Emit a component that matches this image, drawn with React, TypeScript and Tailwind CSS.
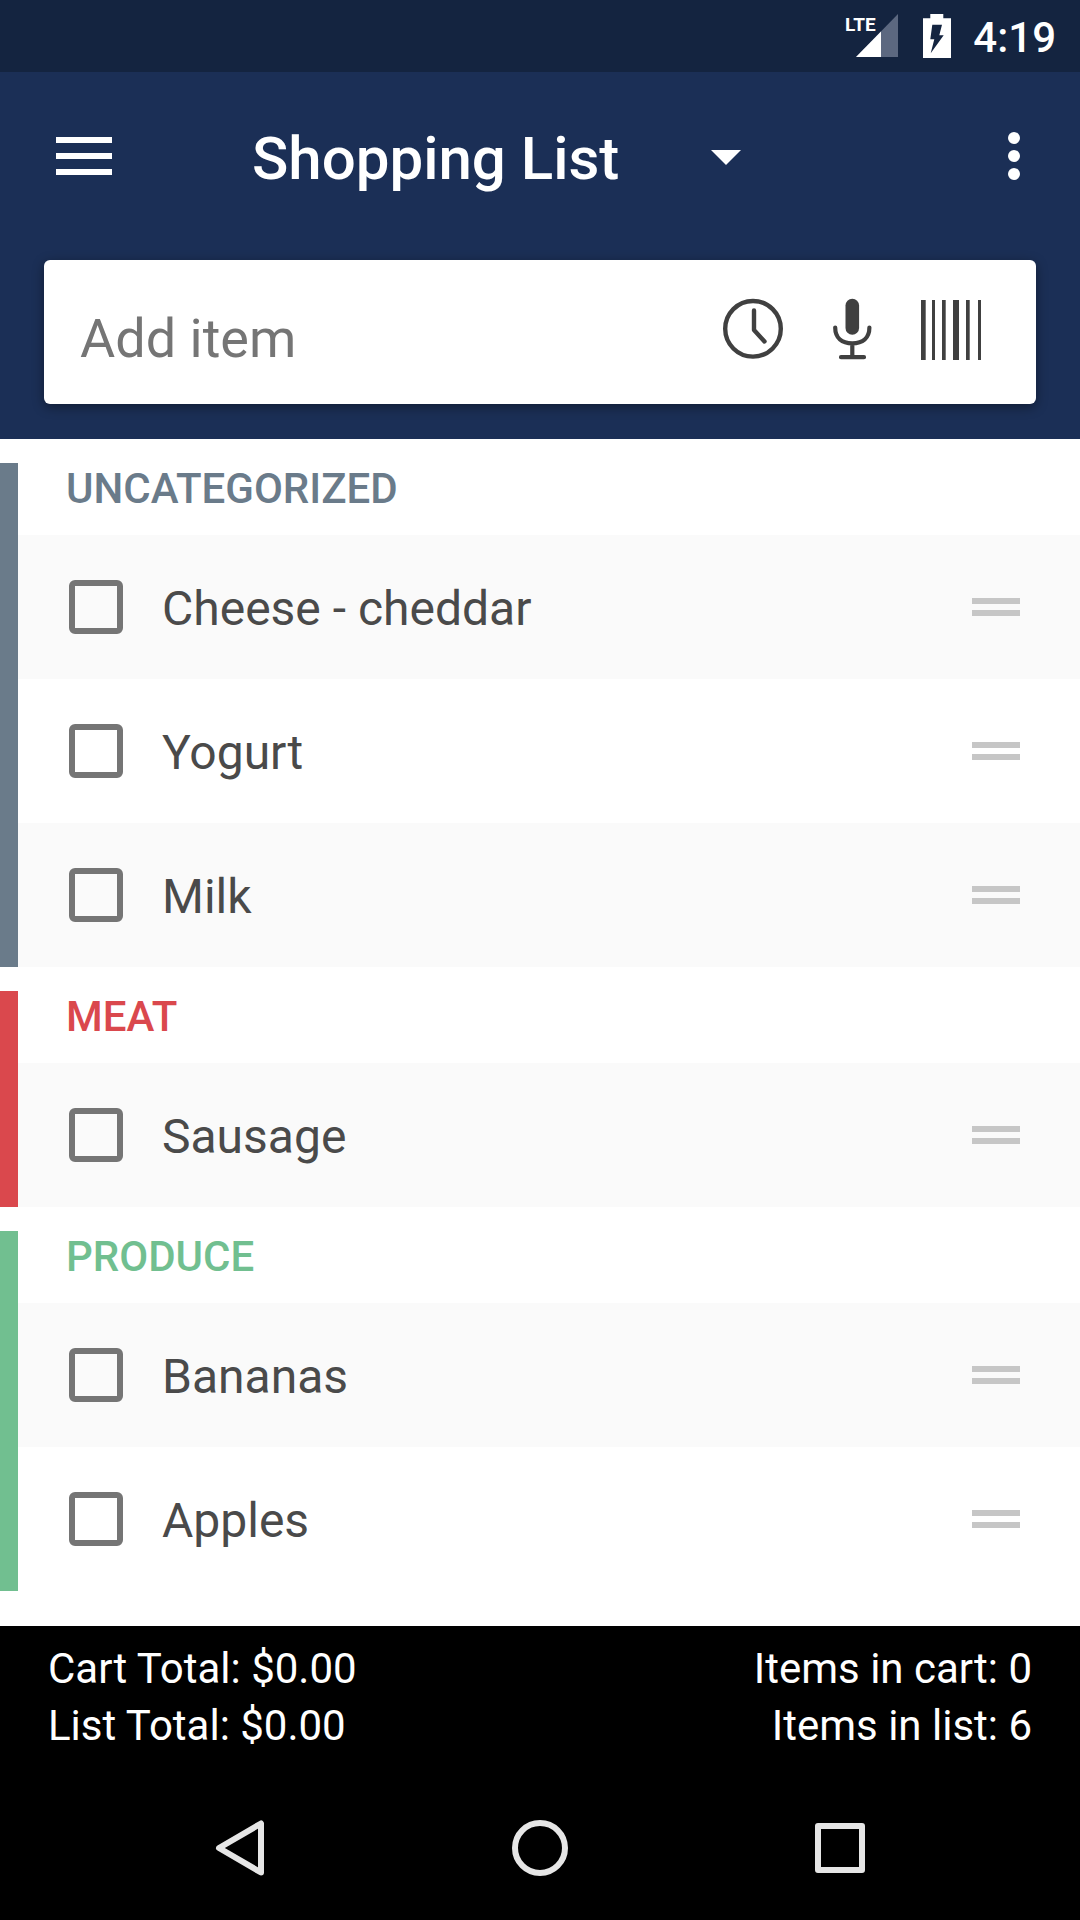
import { useState } from "react"
import clsx from "clsx"

type Section = {
  name: string
  bar: string
  heading: string
  items: string[]
}

const SECTIONS: Section[] = [
  {
    name: "UNCATEGORIZED",
    bar: "border-[#6a7b8a]",
    heading: "text-[#6a7b8a]",
    items: ["Cheese - cheddar", "Yogurt", "Milk"],
  },
  { name: "MEAT", bar: "border-[#da484d]", heading: "text-[#da484d]", items: ["Sausage"] },
  { name: "PRODUCE", bar: "border-[#71bf90]", heading: "text-[#71bf90]", items: ["Bananas", "Apples"] },
]

function StatusBar() {
  return (
    <div className="flex h-18 items-center justify-end bg-[#142440] pr-6 text-white">
      <svg width="54" height="44" viewBox="0 0 54 44" className="mr-6" role="img" aria-label="LTE signal">
        <path d="M53 0v43H11z" fill="#5c6880" />
        <path d="M36 17.4V43H11z" fill="#fff" />
        <text x="0" y="17" fill="#fff" fontSize="19" fontWeight="700" fontFamily="Roboto, sans-serif">
          LTE
        </text>
      </svg>
      <svg width="28" height="44" viewBox="0 0 28 44" className="mr-[22px]" role="img" aria-label="Battery charging">
        <path d="M7.3 0h13v4.3H28V44H0V4.3h7.3z" fill="#fff" />
        <path d="M9.3 10.7H19l-2.7 10.6h4.4l-13 18 3.6-14h-4z" fill="#142440" />
      </svg>
      <span className="pt-1 text-[42px] leading-12 font-medium">4:19</span>
    </div>
  )
}

function Toolbar() {
  return (
    <div className="flex h-[188px] items-center px-14 pb-5">
      <button type="button" aria-label="Open menu">
        <svg width="56" height="38" viewBox="0 0 56 38" fill="#fff">
          <path d="M0 0h56v6H0zM0 16h56v6H0zM0 32h56v6H0z" />
        </svg>
      </button>
      <div className="ml-[140px] grid w-[489px] items-center pt-0.5">
        <select
          aria-label="Current list"
          className="col-start-1 row-start-1 h-20 w-full appearance-none bg-transparent pt-1 text-[60px] leading-[72px] font-medium text-white outline-none"
        >
          <option>Shopping List</option>
        </select>
        <svg
          width="30"
          height="15"
          viewBox="0 0 30 15"
          className="pointer-events-none col-start-1 row-start-1 justify-self-end"
        >
          <path d="M0 0h30L15 15z" fill="#fff" />
        </svg>
      </div>
      <button type="button" aria-label="More options" className="ml-auto pr-1">
        <svg width="12" height="48" viewBox="0 0 12 48" fill="#fff">
          <circle cx="6" cy="6" r="6" />
          <circle cx="6" cy="24" r="6" />
          <circle cx="6" cy="42" r="6" />
        </svg>
      </button>
    </div>
  )
}

function AddItem() {
  const [value, setValue] = useState("")
  return (
    <form
      onSubmit={(e) => e.preventDefault()}
      className="mx-11 flex h-36 items-center rounded-md bg-white pr-[55px] pl-9 shadow-[0_3px_12px_rgba(0,0,0,0.4)]"
    >
      <input
        type="text"
        aria-label="Add item"
        placeholder="Add item"
        value={value}
        onChange={(e) => setValue(e.target.value)}
        className="h-full min-w-0 flex-1 pt-3 text-[54px] text-[#404040] outline-none placeholder:text-[#757575]"
      />
      <div className="flex gap-[39px] pb-1.5">
        <button type="button" aria-label="Recent items">
          <svg width="60" height="62" viewBox="0 0 60 62" fill="none" stroke="#404040" strokeWidth="4.4">
            <circle cx="30" cy="30.8" r="27.8" />
            <path d="M31 12.500v19.500l10.500 11.500" strokeLinecap="round" strokeLinejoin="round" />
          </svg>
        </button>
        <button type="button" aria-label="Voice input">
          <svg width="60" height="62" viewBox="0 0 60 62" fill="none" stroke="#404040" strokeWidth="4.2" strokeLinecap="round">
            <rect x="23.500" y="0.800" width="13.600" height="36" rx="6.800" fill="#404040" stroke="none" />
            <path d="M13.200 29.500C13.200 40 20 45.300 30.300 45.300S47.400 40 47.400 29.500M30.300 46v11M19 59.200h23" />
          </svg>
        </button>
        <button type="button" aria-label="Scan barcode">
          <svg width="60" height="62" viewBox="0 0 60 62" fill="#404040">
            <path d="M0 2h4.700v60H0zM11 2h3v60h-3zM21 2h3.700v60H21zM32 2h6v60h-6zM45 2h3.700v60H45zM57 2h3v60h-3z" />
          </svg>
        </button>
      </div>
    </form>
  )
}

function ItemRow({ name, shaded }: { name: string; shaded: boolean }) {
  return (
    <li className={clsx("flex h-36 items-center pr-[60px] pl-[51px]", shaded && "bg-[#fafafa]")}>
      <label className="flex flex-1 items-center gap-[39px]">
        <input
          type="checkbox"
          className="size-[54px] shrink-0 appearance-none rounded-md border-6 border-[#757575] checked:bg-[#757575]"
        />
        <span className="pt-1 text-[48px] leading-14 text-[#4a4a4a]">{name}</span>
      </label>
      <button type="button" aria-label={`Reorder ${name}`}>
        <svg width="48" height="18" viewBox="0 0 48 18" fill="#c6c6c6">
          <path d="M0 0h48v6H0zM0 12h48v6H0z" />
        </svg>
      </button>
    </li>
  )
}

function Totals() {
  return (
    <div className="flex h-[150px] justify-between bg-black px-12 pt-3.5 text-[42px] leading-[57px] text-white">
      <div>
        <p>Cart Total: $0.00</p>
        <p>List Total: $0.00</p>
      </div>
      <div className="text-right">
        <p>Items in cart: 0</p>
        <p>Items in list: 6</p>
      </div>
    </div>
  )
}

function NavBar() {
  return (
    <nav className="flex h-36 items-center justify-center gap-[244px] bg-black">
      <button type="button" aria-label="Back">
        <svg width="56" height="56" viewBox="0 0 56 56" fill="none" stroke="#e6e6e6" strokeWidth="6" strokeLinejoin="round">
          <path d="M49 3.500v49L7 28z" />
        </svg>
      </button>
      <button type="button" aria-label="Home">
        <svg width="56" height="56" viewBox="0 0 56 56" fill="none" stroke="#e6e6e6" strokeWidth="6">
          <circle cx="28" cy="28" r="25" />
        </svg>
      </button>
      <button type="button" aria-label="Recent apps">
        <svg width="56" height="56" viewBox="0 0 56 56" fill="none" stroke="#e6e6e6" strokeWidth="6" strokeLinejoin="round">
          <path d="M6 6h44v44H6z" />
        </svg>
      </button>
    </nav>
  )
}

export default function App() {
  return (
    <div className="flex min-h-screen flex-col bg-white font-[Roboto,sans-serif]">
      <StatusBar />
      <header className="bg-[#1b2f56] pb-[35px]">
        <Toolbar />
        <AddItem />
      </header>
      <main className="flex-1">
        {SECTIONS.map((section) => (
          <section key={section.name} className={clsx("mt-6 border-l-18", section.bar)}>
            <h2 className={clsx("h-18 pl-12 text-[42px] leading-[52px] font-medium", section.heading)}>
              {section.name}
            </h2>
            <ul>
              {section.items.map((item, i) => (
                <ItemRow key={item} name={item} shaded={i % 2 === 0} />
              ))}
            </ul>
          </section>
        ))}
      </main>
      <Totals />
      <NavBar />
    </div>
  )
}
